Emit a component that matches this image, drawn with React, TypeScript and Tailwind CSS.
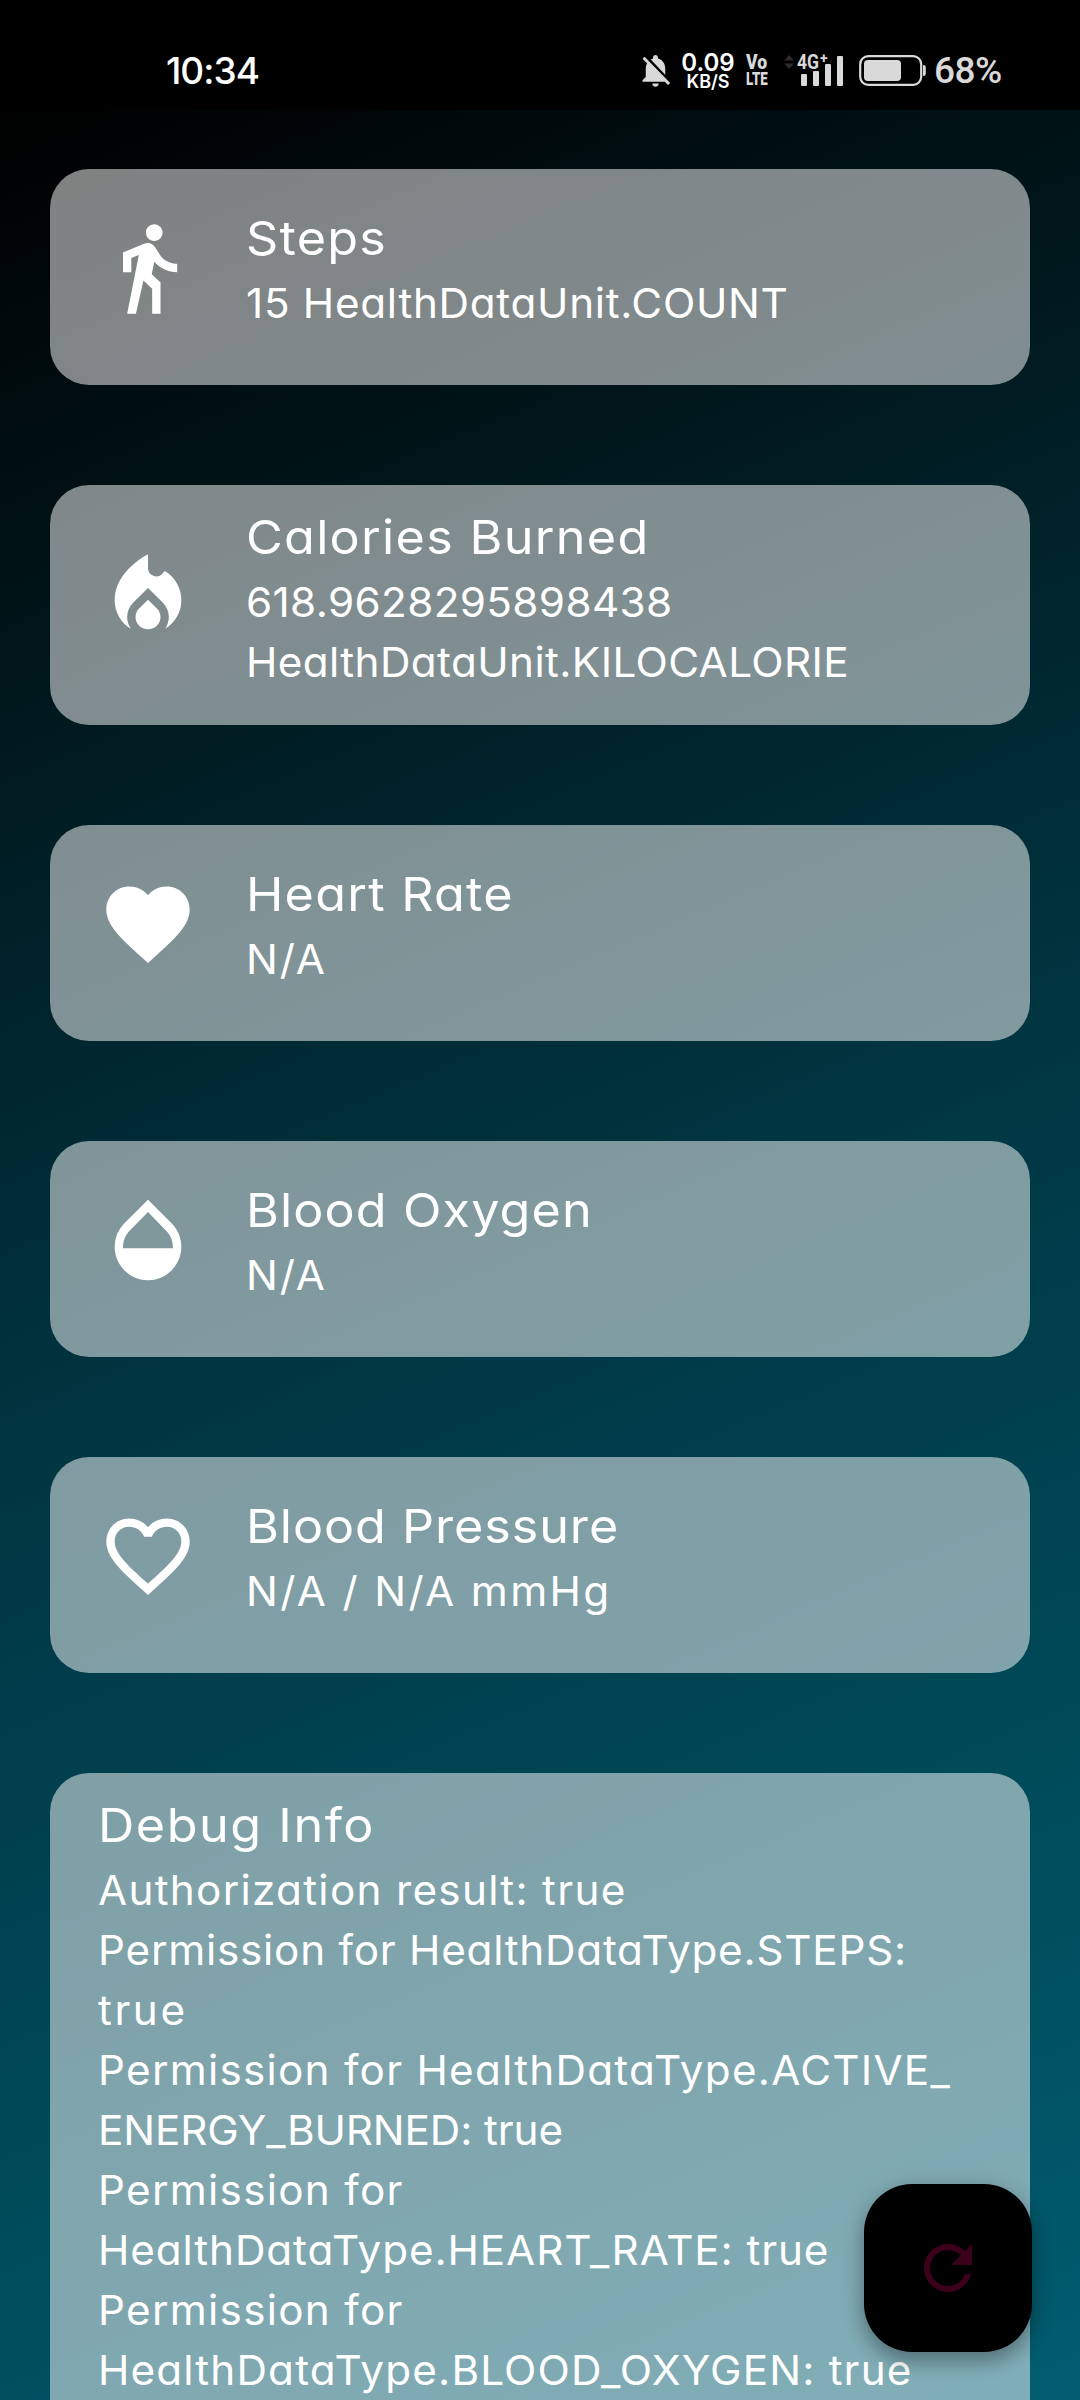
import type { ReactNode } from "react";
import {
  MdDirectionsWalk,
  MdFavorite,
  MdFavoriteBorder,
  MdLocalFireDepartment,
  MdNotificationsOff,
  MdOpacity,
  MdRefresh,
} from "react-icons/md";

type Line = { text: string; tracking: string };

type Metric = {
  icon: ReactNode;
  title: Line;
  lines: Line[];
  box: string;
  iconBox: string;
};

const ICON = "size-[100px]";

const METRICS: Metric[] = [
  {
    icon: <MdDirectionsWalk className={ICON} />,
    title: { text: "Steps", tracking: "tracking-[1.15px]" },
    lines: [{ text: "15 HealthDataUnit.COUNT", tracking: "tracking-[0.69px]" }],
    box: "h-[216px] pt-[33px]",
    iconBox: "mt-[16px]",
  },
  {
    icon: <MdLocalFireDepartment className={ICON} />,
    title: { text: "Calories Burned", tracking: "tracking-[1.22px]" },
    lines: [
      { text: "618.9628295898438", tracking: "tracking-[0.36px]" },
      { text: "HealthDataUnit.KILOCALORIE", tracking: "tracking-[0.4px]" },
    ],
    box: "h-[240px] pt-[16px]",
    iconBox: "mt-[45px]",
  },
  {
    icon: <MdFavorite className={ICON} />,
    title: { text: "Heart Rate", tracking: "tracking-[1.15px]" },
    lines: [{ text: "N/A", tracking: "tracking-[1.85px]" }],
    box: "h-[216px] pt-[33px]",
    iconBox: "mt-[16px]",
  },
  {
    icon: <MdOpacity className={ICON} />,
    title: { text: "Blood Oxygen", tracking: "tracking-[1.04px]" },
    lines: [{ text: "N/A", tracking: "tracking-[1.85px]" }],
    box: "h-[216px] pt-[33px]",
    iconBox: "mt-[16px]",
  },
  {
    icon: <MdFavoriteBorder className={ICON} />,
    title: { text: "Blood Pressure", tracking: "tracking-[0.87px]" },
    lines: [{ text: "N/A / N/A mmHg", tracking: "tracking-[2.3px]" }],
    box: "h-[216px] pt-[33px]",
    iconBox: "mt-[16px]",
  },
];

const DEBUG_LINES: Line[] = [
  { text: "Authorization result: true", tracking: "tracking-[1.26px]" },
  { text: "Permission for HealthDataType.STEPS:", tracking: "tracking-[0.74px]" },
  { text: "true", tracking: "tracking-[2.5px]" },
  { text: "Permission for HealthDataType.ACTIVE_", tracking: "tracking-[1.22px]" },
  { text: "ENERGY_BURNED: true", tracking: "tracking-[-0.1px]" },
  { text: "Permission for", tracking: "tracking-[1.25px]" },
  { text: "HealthDataType.HEART_RATE: true", tracking: "tracking-[0.88px]" },
  { text: "Permission for", tracking: "tracking-[1.25px]" },
  { text: "HealthDataType.BLOOD_OXYGEN: true", tracking: "tracking-[1.13px]" },
];

function TextBlock({ title, lines }: { title: Line; lines: Line[] }) {
  return (
    <div className="flex flex-col whitespace-nowrap">
      <h2 className={`origin-left scale-x-[1.07] self-start text-[47px] leading-[71px] ${title.tracking}`}>
        {title.text}
      </h2>
      {lines.map((line, i) => (
        <p key={i} className={`origin-left scale-x-[1.03] self-start text-[41px] leading-[60px] ${line.tracking}`}>
          {line.text}
        </p>
      ))}
    </div>
  );
}

function MetricCard({ metric }: { metric: Metric }) {
  return (
    <section className={`flex shrink-0 items-start gap-12 rounded-[39px] bg-white/50 px-12 ${metric.box}`}>
      <div className={`shrink-0 ${metric.iconBox}`}>{metric.icon}</div>
      <TextBlock title={metric.title} lines={metric.lines} />
    </section>
  );
}

function SignalIcon() {
  return (
    <div className="relative ml-[14px] h-[34px] w-[61px]">
      <svg viewBox="0 0 61 34" className="size-full">
        <path d="M1 7.5L6 2l5 5.500zM1 10.500L6 16l5-5.500z" fill="#2b2b2b" />
        <g fill="#d9d9d9">
          <rect x="18" y="21" width="6" height="12" rx="1" />
          <rect x="30" y="18" width="6" height="15" rx="1" />
          <rect x="42" y="11" width="6" height="22" rx="1" />
          <rect x="54" y="3" width="6" height="30" rx="1" />
        </g>
      </svg>
      <span className="absolute -top-px left-[14px] origin-left scale-x-[0.88] font-['Roboto'] text-[20px] leading-5 font-bold text-[#d9d9d9]">
        4G
      </span>
      <span className="absolute -top-[3px] left-[37px] font-['Roboto'] text-[14px] leading-4 font-bold text-[#d9d9d9]">
        +
      </span>
    </div>
  );
}

function StatusBar() {
  return (
    <header className="flex h-[110px] shrink-0 items-start bg-black text-[#d9d9d9]">
      <span className="mt-[52px] ml-[166px] w-[100px] text-[37px] leading-[37px] font-medium tracking-[-1px] text-white">
        10:34
      </span>
      <div className="ml-[370px] flex items-start pt-[53px]">
        <MdNotificationsOff className="mt-[-2px] size-[39px]" />
        <div className="ml-[5px] flex w-[56px] flex-col items-center font-semibold text-white">
          <span className="text-[24px] leading-[19px]">0.09</span>
          <span className="mt-[2px] text-[18px] leading-4">KB/S</span>
        </div>
        <div className="ml-[10px] flex w-[23px] flex-col font-['Roboto'] font-black">
          <span className="origin-left scale-x-[0.88] text-[20px] leading-[19px]">Vo</span>
          <span className="mt-[-2px] origin-left scale-x-[0.7] text-[19px] leading-[17px]">LTE</span>
        </div>
        <SignalIcon />
        <svg viewBox="0 0 68 33" className="mt-px ml-[15px] h-[33px] w-[68px]">
          <rect x="1.200" y="2.200" width="61" height="28.600" rx="8" fill="none" stroke="#d9d9d9" strokeWidth="2.200" />
          <rect x="5" y="6" width="37" height="21" rx="4" fill="#d9d9d9" />
          <path d="M64 11c2.500 0 2.800 1 2.800 3v5c0 2-.3 3-2.800 3z" fill="#d9d9d9" />
        </svg>
        <span className="ml-[7px] font-['Roboto'] text-[37px] leading-9 font-medium tracking-[-0.5px]">68%</span>
      </div>
    </header>
  );
}

export default function App() {
  return (
    <div className="relative flex h-[2400px] w-[1080px] flex-col overflow-hidden bg-black font-['Inter',sans-serif] text-white [font-feature-settings:'cv11']">
      <StatusBar />
      <main className="flex flex-1 flex-col gap-[100px] overflow-hidden bg-[linear-gradient(157deg,#000000,#003642_50%,#005d70)] px-[50px] pt-[59px]">
        {METRICS.map((metric) => (
          <MetricCard key={metric.title.text} metric={metric} />
        ))}
        <section className="h-[760px] shrink-0 rounded-[39px] bg-white/50 px-12 pt-[16px]">
          <TextBlock title={{ text: "Debug Info", tracking: "tracking-[1.44px]" }} lines={DEBUG_LINES} />
        </section>
      </main>
      <button
        aria-label="Refresh"
        className="absolute right-12 bottom-12 flex size-[168px] items-center justify-center rounded-[48px] bg-black text-[#3b001b] shadow-[0_10px_18px_rgba(0,0,0,0.26),0_3px_24px_rgba(0,0,0,0.14)]"
      >
        <MdRefresh className="size-[72px]" />
      </button>
    </div>
  );
}
